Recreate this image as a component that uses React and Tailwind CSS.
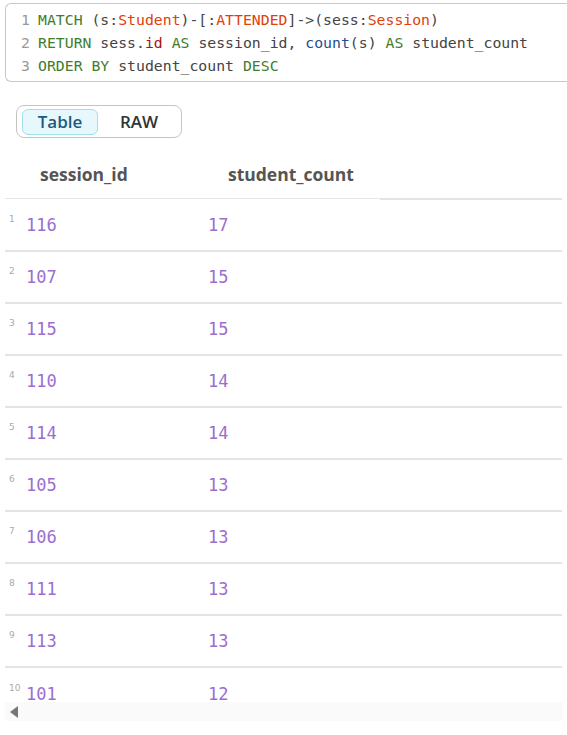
import React from 'react';

const rows = [
  ['116', '17'],
  ['107', '15'],
  ['115', '15'],
  ['110', '14'],
  ['114', '14'],
  ['105', '13'],
  ['106', '13'],
  ['111', '13'],
  ['113', '13'],
  ['101', '12'],
];

const K = ({ children }) => <span className="text-[#3f7d2e]">{children}</span>;
const L = ({ children }) => <span className="text-[#e0400a]">{children}</span>;

function CodeBox() {
  const lines = [
    <>
      <K>MATCH</K> (s:<L>Student</L>)-[:<L>ATTENDED</L>]-&gt;(sess:<L>Session</L>)
    </>,
    <>
      <K>RETURN</K> sess.<span className="text-[#a31515]">id</span> <K>AS</K> session_id, <span className="text-[#1d4f91]">count</span>(s) <K>AS</K> student_count
    </>,
    <>
      <K>ORDER BY</K> student_count <K>DESC</K>
    </>,
  ];
  return (
    <div className="ml-[5px] mt-[3px] border border-r-0 border-[#c8c8c8] rounded-tl-md rounded-bl-md py-[4px] font-['DejaVu_Sans_Mono',monospace] text-[14.8px] leading-[23px] text-[#444]">
      {lines.map((l, i) => (
        <div key={i} className="flex whitespace-pre">
          <span className="w-[32px] text-right pr-[8px] text-[#999]">{i + 1}</span>
          <span>{l}</span>
        </div>
      ))}
    </div>
  );
}

export default function App() {
  return (
    <div className="w-[567px] h-[735px] overflow-hidden bg-white font-['Open_Sans',sans-serif]">
      <CodeBox />

      <div className="ml-[16px] mt-[23px] w-[166px] h-[33px] border border-[#c4c4c4] rounded-lg flex items-center px-[5px] gap-[4px]">
        <div className="w-[76px] h-[26px] rounded-md bg-[#e6f8fb] border border-[#9fe0ec] flex items-center justify-center text-[17px] font-semibold text-[#1e5a80]">
          Table
        </div>
        <div className="flex-1 flex items-center justify-center text-[17px] font-semibold text-[#333]">RAW</div>
      </div>

      <div className="mx-[5px] mt-[13px]">
        <div className="flex h-[48px] items-center">
          <div className="w-[375px] flex h-full items-center border-b border-[#e6e6e6]">
            <div className="w-[223px] pl-[35px] text-[17.5px] font-bold text-[#555]">session_id</div>
            <div className="text-[17.5px] font-bold text-[#555]">student_count</div>
          </div>
          <div className="flex-1 h-full border-b-2 border-[#e4e4e4] translate-y-[1px]" />
        </div>

        <div className="pt-[1px]">
          {rows.map((r, i) => (
            <div
              key={i}
              className={`flex items-center h-[52px] ${i < rows.length - 1 ? 'border-b-2 border-[#e4e4e4]' : ''}`}
            >
              <div className="w-[203px] flex items-start">
                <span className="w-[21px] pl-[4px] -mt-[1px] text-[9px] leading-[12px] text-[#aaa] font-['DejaVu_Sans',sans-serif]">{i + 1}</span>
                <span className="font-['DejaVu_Sans_Mono',monospace] text-[17px] leading-[22px] text-[#9b6fd0]">{r[0]}</span>
              </div>
              <span className="font-['DejaVu_Sans_Mono',monospace] text-[17px] leading-[22px] text-[#9b6fd0]">{r[1]}</span>
            </div>
          ))}
        </div>
      </div>

      <div className="mx-[5px] -mt-[18px] relative h-[19px] bg-[#fafafa] flex items-center">
        <svg width="9" height="12" viewBox="0 0 9 12" className="ml-[5px]">
          <path d="M8 0 L8 12 L0 6 Z" fill="#777" />
        </svg>
      </div>
    </div>
  );
}
